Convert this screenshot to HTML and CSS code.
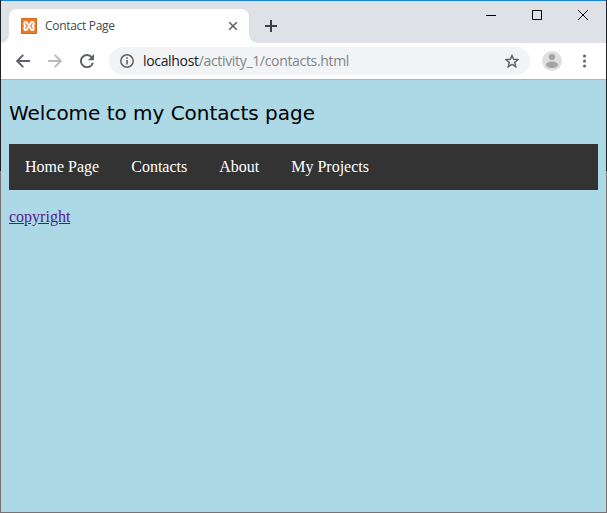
FILE: index.html
```html
<!DOCTYPE html>
<html lang="en">
<head>
<meta charset="utf-8">
<title>Contact Page</title>
<link rel="stylesheet" href="styles.css">
</head>
<body>
<div class="window">
  <header class="tabstrip">
    <div class="tab">
      <svg class="favicon" width="16" height="16" viewBox="0 0 16 16">
        <rect width="16" height="16" rx="1" fill="#d9661c"/>
        <rect x="1" y="1" width="14" height="14" fill="#ee7a2b"/>
        <path d="M5.2 4C3.2 3.6 2.6 6.2 4.3 8C2.6 9.8 3.2 12.4 5.2 12C6.9 11.7 6 9 8 9S9.1 11.7 10.8 12C12.8 12.4 13.4 9.8 11.7 8C13.4 6.2 12.8 3.6 10.8 4C9.1 4.3 10 7 8 7S6.9 4.3 5.2 4Z" fill="none" stroke="#fff" stroke-width="2"/>
      </svg>
      <span class="tab-title">Contact Page</span>
      <svg class="tab-close" width="10" height="10" viewBox="0 0 10 10"><path d="M1.2 1.2L8.8 8.8M8.8 1.2L1.2 8.8" stroke="#5f6368" stroke-width="1.6"/></svg>
    </div>
    <svg class="new-tab" width="12" height="12" viewBox="0 0 12 12"><path d="M6 0V12M0 6H12" stroke="#3c4043" stroke-width="2"/></svg>
    <div class="controls">
      <svg width="10" height="10" viewBox="0 0 10 10"><path d="M0 5.5H10" stroke="#000"/></svg>
      <svg width="10" height="10" viewBox="0 0 10 10"><path d="M.5 .5H9.5V9.5H.5Z" fill="none" stroke="#000"/></svg>
      <svg width="10" height="10" viewBox="0 0 10 10"><path d="M0 0L10 10M10 0L0 10" stroke="#000"/></svg>
    </div>
  </header>
  <div class="toolbar">
    <svg class="nav-icon" width="14" height="14" viewBox="0 0 14 14"><path d="M14 7H1.5M7.3 .8L1.2 7L7.3 13.2" fill="none" stroke="#5f6368" stroke-width="1.9"/></svg>
    <svg class="nav-icon forward" width="14" height="14" viewBox="0 0 14 14"><path d="M0 7H12.5M6.7 .8L12.8 7L6.7 13.2" fill="none" stroke="#bababa" stroke-width="1.9"/></svg>
    <svg class="nav-icon" width="14" height="14" viewBox="0 0 14 14"><path d="M12.1 3.7A6.1 6.1 0 1 0 12.9 8.8" fill="none" stroke="#5f6368" stroke-width="2"/><path d="M14 0V6.2H7.8Z" fill="#5f6368"/></svg>
    <div class="omnibox">
      <svg width="14" height="14" viewBox="0 0 14 14"><circle cx="7" cy="7" r="6.2" fill="none" stroke="#5f6368" stroke-width="1.5"/><path d="M7 3.2V4.8M7 6V10.6" stroke="#5f6368" stroke-width="1.6"/></svg>
      <span class="url"><span class="host">localhost</span>/activity_1/contacts.html</span>
      <svg class="star" width="14" height="14" viewBox="0 0 14 14"><path d="M7 1.5L8.7 5.2L13 5.6L9.7 8.4L10.8 12.7L7 10.4L3.2 12.7L4.3 8.4L1 5.6L5.3 5.2Z" fill="none" stroke="#5f6368" stroke-width="1.45"/></svg>
    </div>
    <svg class="avatar" width="20" height="20" viewBox="0 0 20 20"><circle cx="10" cy="10" r="10" fill="#dedede"/><circle cx="10" cy="6" r="3.1" fill="#a3a3a3"/><ellipse cx="10" cy="13.8" rx="6" ry="3.2" fill="#a3a3a3"/></svg>
    <svg class="menu" width="4" height="14" viewBox="0 0 4 14"><g fill="#5f6368"><circle cx="1.5" cy="2" r="1.5"/><circle cx="1.5" cy="7" r="1.5"/><circle cx="1.5" cy="12" r="1.5"/></g></svg>
  </div>
  <main class="page">
    <h1 class="heading">Welcome to my Contacts page</h1>
    <nav class="navbar">
      <a class="home">Home Page</a><a class="contacts">Contacts</a><a class="about">About</a><a class="projects">My Projects</a>
    </nav>
    <a class="copyright">copyright</a>
  </main>
</div>
</body>
</html>
```
FILE: styles.css
```css
* { box-sizing: border-box; }
body { margin: 0; }
svg { display: block; flex: none; }

.window {
  display: flex;
  flex-direction: column;
  width: 607px;
  height: 513px;
  padding: 0 1px 1px;
  background: linear-gradient(#202124 171px, #777172 171px);
}

.tabstrip {
  display: flex;
  height: 43px;
  padding: 8px 0 0 8px;
  border-top: 1px solid #1681d6;
  background: #dee1e6;
}
.tab {
  position: relative;
  display: flex;
  align-items: center;
  width: 240px;
  height: 34px;
  padding: 0 11px 0 12px;
  border-radius: 8px 8px 0 0;
  background: #fff;
}
.tab::before, .tab::after {
  content: "";
  position: absolute;
  bottom: 0;
  width: 8px;
  height: 8px;
}
.tab::before { left: -8px; background: radial-gradient(circle at 0 0, transparent 7.5px, #fff 8px); }
.tab::after { right: -8px; background: radial-gradient(circle at 100% 0, transparent 7.5px, #fff 8px); }
.tab-title {
  margin-left: 8px;
  font: 12px/16px "Open Sans", sans-serif;
  letter-spacing: -0.3px;
  color: #45484c;
}
.tab-close { margin-left: auto; }
.new-tab { margin: 11px 0 0 16px; }
.controls {
  display: flex;
  gap: 36px;
  margin: 1px 18px 0 auto;
}

.toolbar {
  display: flex;
  align-items: center;
  height: 37px;
  padding-left: 15px;
  border-bottom: 1px solid #b6b4b6;
  background: #fff;
}
.nav-icon { margin-right: 18px; }
.omnibox {
  display: flex;
  align-items: center;
  width: 421px;
  height: 28px;
  margin-left: -3px;
  padding: 0 11px;
  border-radius: 14px;
  background: #f1f3f4;
}
.url {
  margin-left: 9px;
  font: 14px/20px "Open Sans", sans-serif;
  letter-spacing: -0.33px;
  color: #80868b;
}
.host { color: #202124; }
.star { margin-left: auto; }
.avatar { margin-left: 12px; }
.menu { margin-left: 21px; }

.page {
  flex: 1;
  padding: 20px 8px 0;
  background: #add8e6;
}
.heading {
  margin: 0 0 18px;
  font: 20px/26px "DejaVu Sans", Verdana, sans-serif;
  letter-spacing: -0.02px;
  color: #000;
  white-space: nowrap;
}
.navbar {
  display: flex;
  height: 46px;
  background: #333;
}
.navbar a {
  padding: 14px 16px;
  font: 16px/18px "Liberation Serif", serif;
  color: #fff;
}
.copyright {
  display: block;
  margin-top: 18px;
  font: 16px/18px "Liberation Serif", serif;
  color: #551a8b;
  text-decoration: underline;
}
```
